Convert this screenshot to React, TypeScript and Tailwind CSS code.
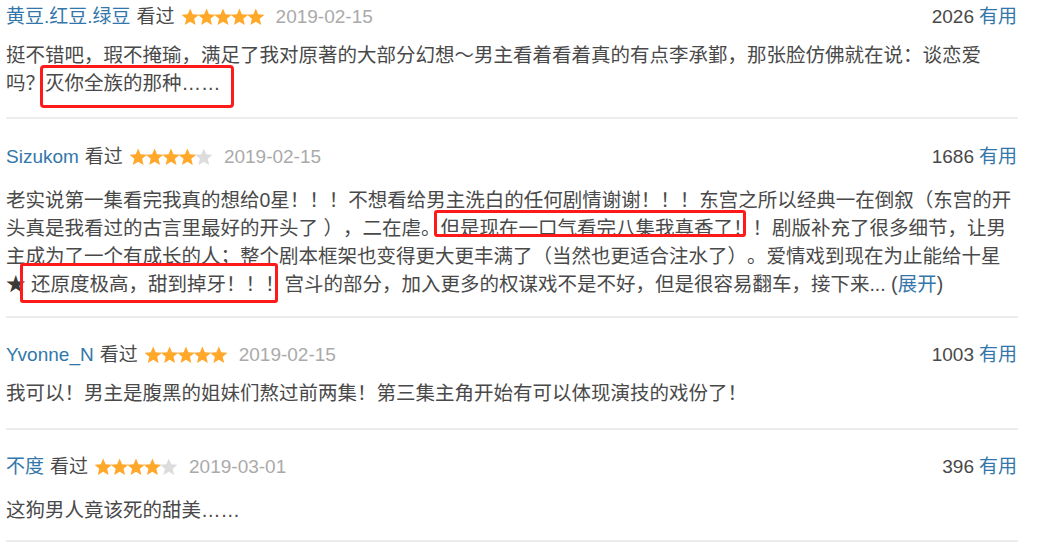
import React from "react";

const STAR_COLOR = "#ffa82a";
const STAR_OFF = "#dcdcdc";

function starPoints(cx: number, cy: number, ro: number, ri: number) {
  const pts: string[] = [];
  for (let k = 0; k < 10; k++) {
    const r = k % 2 === 0 ? ro : ri;
    const a = ((-90 + 36 * k) * Math.PI) / 180;
    pts.push(`${(cx + r * Math.cos(a)).toFixed(2)},${(cy + r * Math.sin(a)).toFixed(2)}`);
  }
  return pts.join(" ");
}

function Stars({ n }: { n: number }) {
  return (
    <svg width="82" height="18" viewBox="0 0 82 18" className="inline-block">
      {[0, 1, 2, 3, 4].map((i) => (
        <polygon
          key={i}
          points={starPoints(8.2 + 16.4 * i, 9.6, 9.2, 4.1)}
          fill={i < n ? STAR_COLOR : STAR_OFF}
        />
      ))}
    </svg>
  );
}

function Header({
  name,
  stars,
  date,
  count,
}: {
  name: string;
  stars: number;
  date: string;
  count: string;
}) {
  return (
    <div className="flex h-[28px] items-center justify-between text-[19px] leading-[28px]">
      <div className="flex items-center whitespace-nowrap">
        <span className="text-[#3377aa]">{name}</span>
        <span className="ml-[6px] text-[#494949]">看过</span>
        <span className="ml-[7px] flex items-center">
          <Stars n={stars} />
        </span>
        <span className="ml-[12px] text-[#aaaaaa]">{date}</span>
      </div>
      <div className="whitespace-nowrap pr-[1px]">
        <span className="text-[#494949]">{count}</span>
        <span className="ml-[5px] text-[#3377aa]">有用</span>
      </div>
    </div>
  );
}

const bodyCls =
  "whitespace-nowrap text-[19.5px] leading-[28px] text-[#494949] [text-spacing-trim:space-all]";

export default function App() {
  return (
    <div className="min-h-[549px] w-[1038px] bg-white font-[family-name:'Liberation_Sans','Noto_Sans_CJK_SC',sans-serif] [text-spacing-trim:space-all]">
      <div className="ml-[6px] w-[1012px]">
        {/* Review 1 */}
        <div className="border-b-2 border-[#ececec] pb-[20px] pt-[3px]">
          <Header name="黄豆.红豆.绿豆" stars={5} date="2019-02-15" count="2026" />
          <div className={`mt-[10px] ${bodyCls}`}>
            挺不错吧，瑕不掩瑜，满足了我对原著的大部分幻想～男主看着看着真的有点李承鄞，那张脸仿佛就在说：谈恋爱
            <br />
            吗？
            <span className="relative inline-block leading-[28px]">
              灭你全族的那种……
              <span className="pointer-events-none absolute left-[-5px] top-[-4px] h-[43px] w-[194px] rounded-[4px] border-[3px] border-[#ff1a1a]" />
            </span>
          </div>
        </div>

        {/* Review 2 */}
        <div className="border-b-2 border-[#ececec] pb-[18px] pt-[24px]">
          <Header name="Sizukom" stars={4} date="2019-02-15" count="1686" />
          <div className={`mt-[15px] ${bodyCls}`}>
            老实说第一集看完我真的想给0星！！！不想看给男主洗白的任何剧情谢谢！！！东宫之所以经典一在倒叙（东宫的开
            <br />
            头真是我看过的古言里最好的开头了{" "}），二在虐。
            <span className="relative inline-block leading-[28px]">
              但是现在一口气看完八集我真香了！
              <span className="pointer-events-none absolute left-[-6px] top-[-4px] h-[27px] w-[312px] rounded-[3px] border-[3px] border-[#ff1a1a]" />
            </span>
            ！剧版补充了很多细节，让男
            <br />
            主成为了一个有成长的人；整个剧本框架也变得更大更丰满了（当然也更适合注水了）。爱情戏到现在为止能给十星
            <br />
            <span className="text-[#3a3a3a]">★</span>{" "}
            <span className="relative inline-block leading-[28px]">
              还原度极高，甜到掉牙！！！
              <span className="pointer-events-none absolute left-[-11px] top-[-7px] h-[40px] w-[258px] rounded-[3px] border-[3px] border-[#ff1a1a]" />
            </span>
            宫斗的部分，加入更多的权谋戏不是不好，但是很容易翻车，接下来... (<span className="text-[#3377aa]">展开</span>)
          </div>
        </div>

        {/* Review 3 */}
        <div className="border-b-2 border-[#ececec] pb-[21px] pt-[23px]">
          <Header name="Yvonne_N" stars={5} date="2019-02-15" count="1003" />
          <div className={`mt-[10px] ${bodyCls}`}>
            我可以！男主是腹黑的姐妹们熬过前两集！第三集主角开始有可以体现演技的戏份了！
          </div>
        </div>

        {/* Review 4 */}
        <div className="border-b-2 border-[#ececec] pb-[16px] pt-[23px]">
          <Header name="不度" stars={4} date="2019-03-01" count="396" />
          <div className={`mt-[15px] ${bodyCls}`}>
            这狗男人竟该死的甜美……
          </div>
        </div>
      </div>
    </div>
  );
}
